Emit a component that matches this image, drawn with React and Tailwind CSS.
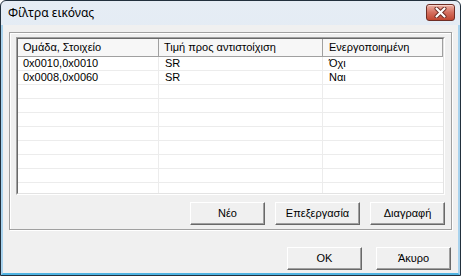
import React from "react";

const rows = [
  ["0x0010,0x0010", "SR", "Όχι"],
  ["0x0008,0x0060", "SR", "Ναι"],
  ["", "", ""],
  ["", "", ""],
  ["", "", ""],
  ["", "", ""],
  ["", "", ""],
  ["", "", ""],
  ["", "", ""],
  ["", "", ""],
];

const Button = ({ children, className = "" }) => (
  <button
    className={
      "h-[23px] bg-[#f0f0f0] border border-t-white border-l-white border-r-[#696969] border-b-[#696969] shadow-[inset_-1px_-1px_0_#a0a0a0] text-[11px] text-black leading-none " +
      className
    }
  >
    {children}
  </button>
);

const CloseGlyph = () => (
  <svg width="13" height="11" viewBox="0 0 13 11">
    <path d="M2.5 1.5 L10.5 9.5 M10.5 1.5 L2.5 9.5" stroke="#6a2a22" strokeWidth="4" strokeLinecap="round" />
    <path d="M2.5 1.5 L10.5 9.5 M10.5 1.5 L2.5 9.5" stroke="#ffffff" strokeWidth="2.2" strokeLinecap="round" />
  </svg>
);

export default function App() {
  return (
    <div
      className="w-[461px] h-[276px] flex flex-col border border-[#22303d] rounded-t-[6px] overflow-hidden bg-gradient-to-b from-[#e6edf5] to-[#d5e1ee]"
      style={{ fontFamily: '"Liberation Sans", Arial, sans-serif' }}
    >
      {/* title bar */}
      <div className="h-[24px] flex items-center justify-between pl-[7px] pr-[5px] shrink-0">
        <span className="text-[12px] text-black" style={{ fontFamily: '"Noto Sans", "Liberation Sans", sans-serif' }}>
          Φίλτρα εικόνας
        </span>
        <div className="w-[29px] h-[17px] mt-[-2px] rounded-[3px] border border-[#6e2d25] bg-gradient-to-b from-[#eab1a6] via-[#d56f5f] to-[#c0452f] shadow-[inset_0_1px_0_#f6d2ca] flex items-center justify-center">
          <CloseGlyph />
        </div>
      </div>

      {/* client area */}
      <div className="flex-1 flex flex-col bg-[#f0f0f0] border-x-2 border-b-2 border-x-[#a9d3ee] border-b-[#4fb3e2]">
        {/* group box */}
        <div className="ml-[6px] mt-[7px] w-[443px] h-[198px] border border-[#a0a0a0] shadow-[inset_1px_1px_0_#fff,1px_1px_0_#fff] pl-[6px] pt-[4px]">
          <div className="w-[429px] h-[158px] border border-t-[#a0a0a0] border-l-[#a0a0a0] border-r-white border-b-white">
            <div className="w-full h-full border border-t-[#696969] border-l-[#696969] border-r-[#e3e3e3] border-b-[#e3e3e3] bg-white overflow-hidden text-[11px] text-black">
              {/* header */}
              <div className="flex h-[18px] bg-[#f7f7f7] border-b border-[#a0a0a0]">
                <div className="w-[141px] border-r border-[#a0a0a0] pl-[5px] flex items-center">Ομάδα, Στοιχείο</div>
                <div className="w-[164px] border-r border-[#a0a0a0] pl-[5px] flex items-center">Τιμή προς αντιστοίχιση</div>
                <div className="flex-1 border-r border-[#a0a0a0] pl-[6px] flex items-center">Ενεργοποιημένη</div>
              </div>
              {rows.map((r, i) => (
                <div key={i} className="flex h-[14px] border-b border-[#ececec]">
                  <div className="w-[141px] border-r border-[#ececec] pl-[5px] flex items-center">{r[0]}</div>
                  <div className="w-[164px] border-r border-[#ececec] pl-[6px] flex items-center">{r[1]}</div>
                  <div className="flex-1 pl-[6px] flex items-center">{r[2]}</div>
                </div>
              ))}
            </div>
          </div>
          <div className="w-[429px] mt-[7px] flex justify-end gap-[10px]">
            <Button className="w-[75px]">Νέο</Button>
            <Button className="w-[85px]">Επεξεργασία</Button>
            <Button className="w-[75px]">Διαγραφή</Button>
          </div>
        </div>

        {/* dialog buttons */}
        <div className="mt-[17px] mr-[7px] flex justify-end gap-[14px]">
          <Button className="w-[75px]">OK</Button>
          <Button className="w-[75px]">Άκυρο</Button>
        </div>
      </div>
    </div>
  );
}
